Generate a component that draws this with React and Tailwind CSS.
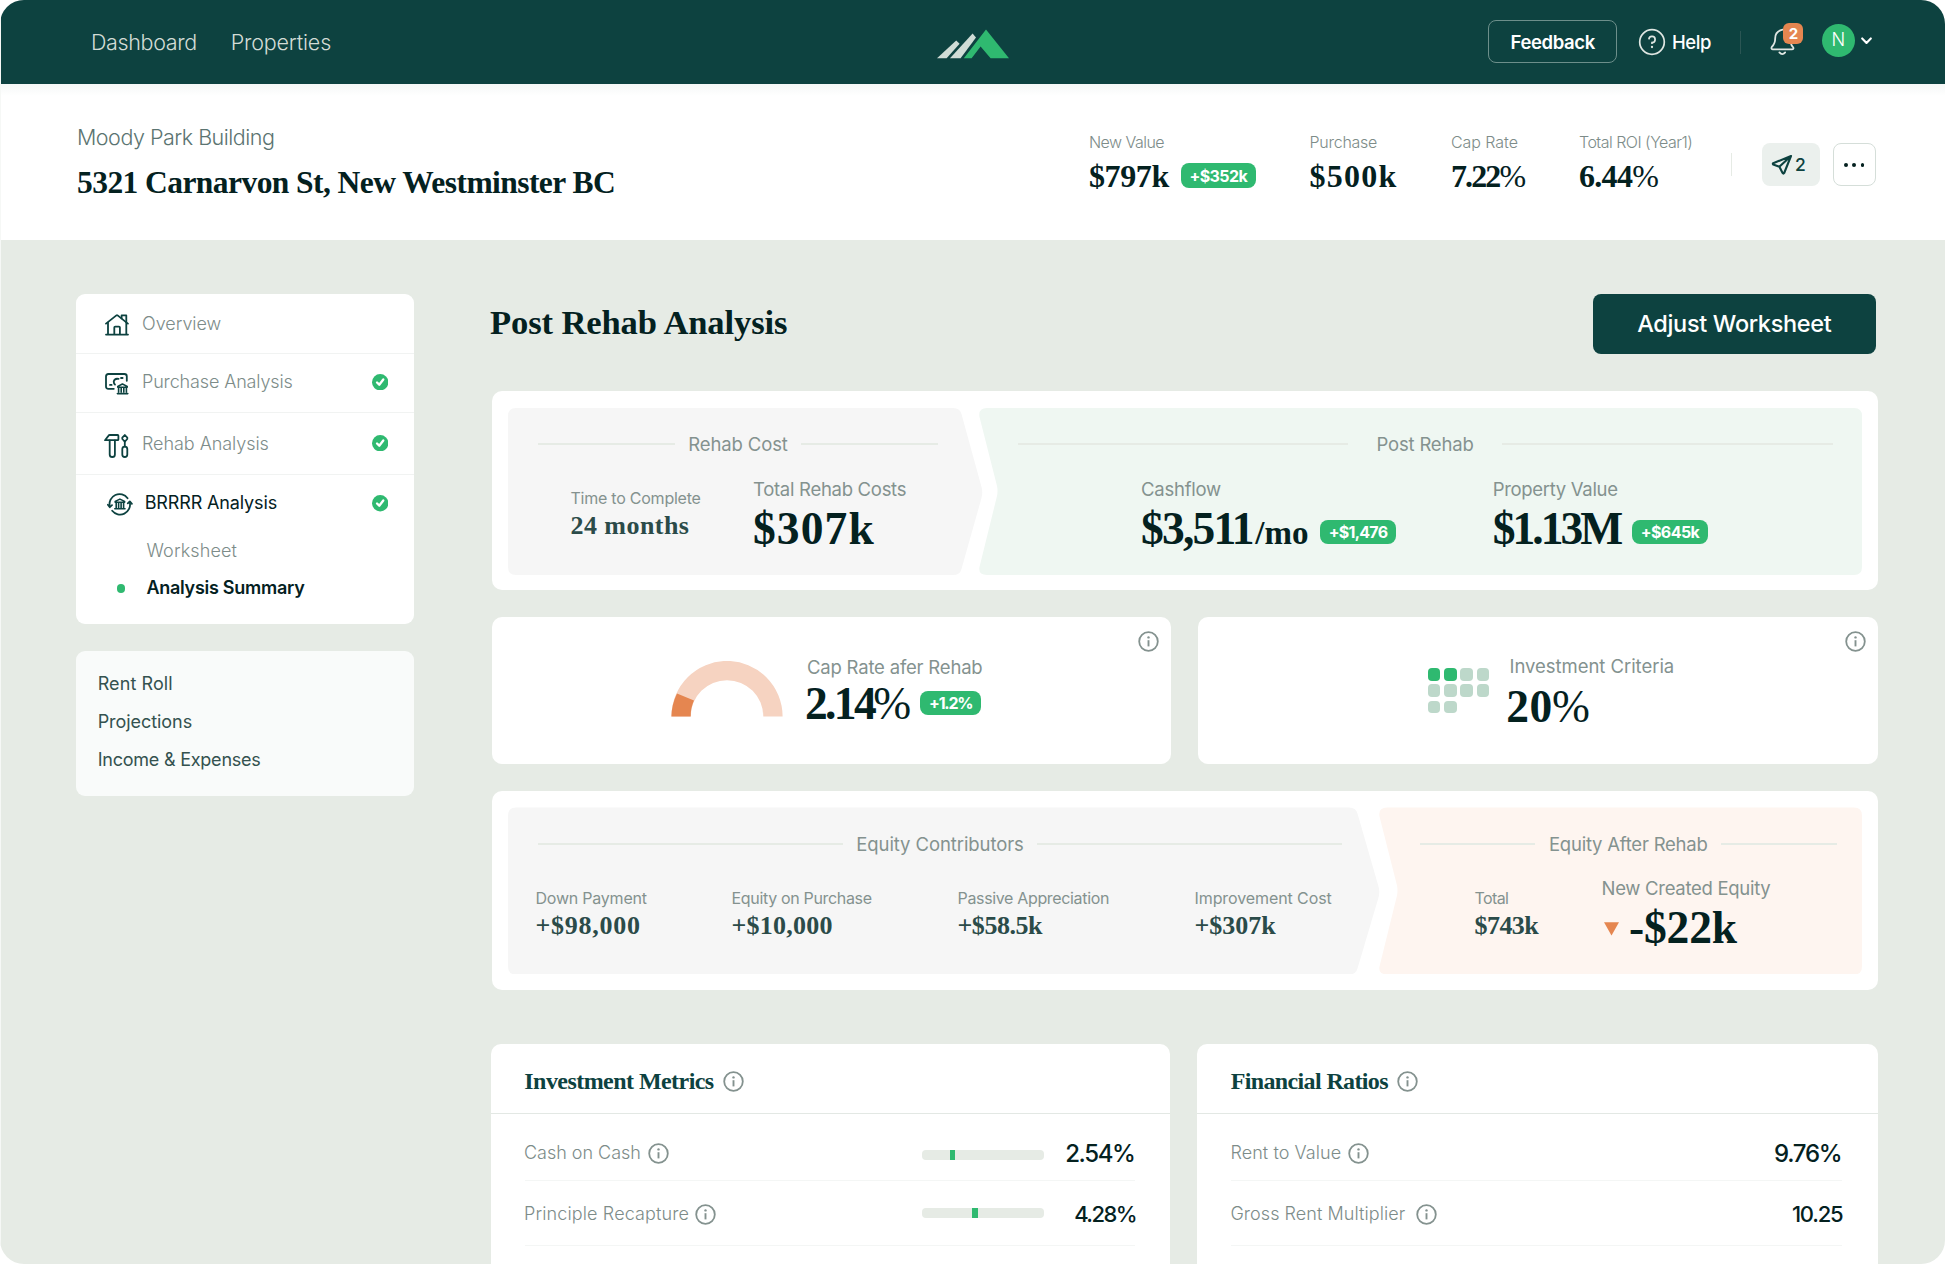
const SANS = "font-['Inter','Liberation_Sans',sans-serif]";
const SERIF = "font-['Liberation_Serif',serif] font-bold";
const LABEL_SM = "text-[16px] leading-[20px] whitespace-nowrap text-[#84928f]";
const LABEL_LG = "text-[18.5px] leading-[24px] whitespace-nowrap text-[#84928f]";
const VALUE_SM = `${SERIF} text-[26px] leading-[30px] whitespace-nowrap text-[#2b4b49]`;
const VALUE_LG = `${SERIF} text-[45.5px] leading-[50px] whitespace-nowrap text-[#04211f]`;

function Logo() {
  return (
    <svg width="72" height="30" viewBox="0 0 72 30" className="mt-[28.5px]">
      <path d="M0 29.3 19.2 11.6 22.6 14.8 9.6 29.3Z" fill="#d0dcd6" />
      <path d="M13 29.3 35.6 4.6 39 8.4 23.6 29.3Z" fill="#d0dcd6" />
      <path d="M26.8 29.3 49 .4 72 29.3H53.6L43.6 17.6 34.6 29.3Z" fill="#2fb970" />
    </svg>
  );
}

function InfoIcon({ className = "" }) {
  return (
    <svg width="21" height="21" viewBox="0 0 21 21" fill="none" className={`shrink-0 ${className}`}>
      <circle cx="10.5" cy="10.5" r="9.3" stroke="#84928f" strokeWidth="1.8" />
      <path d="M10.5 9.2V15.4" stroke="#84928f" strokeWidth="1.9" />
      <circle cx="10.5" cy="6.4" r="1.2" fill="#84928f" />
    </svg>
  );
}

function CheckIcon({ className = "" }) {
  return (
    <svg width="16.4" height="16.4" viewBox="0 0 16 16" fill="none" className={`shrink-0 ${className}`}>
      <circle cx="8" cy="8" r="8" fill="#2fb970" />
      <path d="M4.9 8.3 7.1 10.4 11 5.4" stroke="#fff" strokeWidth="2.3" strokeLinecap="round" strokeLinejoin="round" />
    </svg>
  );
}

function Icon({ w, h, className = "", children }) {
  return (
    <svg
      width={w}
      height={h}
      viewBox={`0 0 ${w} ${h}`}
      fill="none"
      stroke="#0d4240"
      strokeWidth="1.8"
      strokeLinecap="round"
      strokeLinejoin="round"
      className={`shrink-0 ${className}`}
    >
      {children}
    </svg>
  );
}

function HouseIcon({ className }) {
  return (
    <Icon w={24} h={22} className={className}>
      <path d="M1 9.6 11.4 1.4Q12 1 12.6 1.4L22.9 9.6" />
      <path d="M16.6 4.4V1.4H21.3V8" />
      <path d="M3 8.6V20M21.3 8.6V20M1 20.6H23" />
      <path d="M9.3 20V13.6Q9.3 12.7 10.2 12.7H14Q14.9 12.7 14.9 13.6V20" />
    </Icon>
  );
}

function PurchaseIcon({ className }) {
  return (
    <Icon w={24} h={22} className={className}>
      <path d="M8.8 15.8H3.4Q1 15.8 1 13.4V3.4Q1 1 3.4 1H19.4Q21.8 1 21.8 3.4V7.8" />
      <path d="M13.6 5.9Q9.6 5 8.7 8.6 8.7 10.4 10 11.6" />
      <path d="M16 5H17.6M5 11.9H6.6" />
      <path d="M12.8 14.2V13.4L17.4 11 22.2 13.4V14.2ZM13.6 14.6V19M16.2 14.6V19M18.8 14.6V19M21.4 14.6V19M12.4 20.6H22.8" strokeWidth="1.6" />
    </Icon>
  );
}

function ToolsIcon({ className }) {
  return (
    <Icon w={25} h={24} className={className}>
      <path d="M1 6.2 4.6 1.6Q5 1 5.8 1H13.6Q14.4 1 14.4 1.8V5.4Q14.4 6.2 13.6 6.2Z" />
      <path d="M5.7 6.4V20.4A2.6 2.6 0 0 0 10.9 20.4V6.4" />
      <path d="M18.3 3.6 20.8 1 23.3 3.6V5L20.8 7.6 18.3 5Z" />
      <path d="M20.8 7.6V12.4" />
      <rect x="18.3" y="12.6" width="5" height="10.4" rx="2.5" />
    </Icon>
  );
}

function CycleIcon({ className }) {
  return (
    <Icon w={26} h={23} className={className}>
      <path d="M2.8 13.4A10 10 0 0 1 20.6 5.2" />
      <path d="M22.8 9.4A10 10 0 0 1 5.2 17.8" />
      <path d="M.9 11.8 2.8 14.2 5 12.2M20.8 10.4 22.8 8.4 24.9 10.8" />
      <path d="M8.2 9.2V8.4L12.9 6.1 17.6 8.4V9.2ZM9.2 9.6V15M11.6 9.6V15M14.1 9.6V15M16.6 9.6V15M7.8 15.8H18" strokeWidth="1.6" />
    </Icon>
  );
}

function Badge({ children, className = "" }) {
  return (
    <span
      className={`flex h-[24.5px] shrink-0 items-center justify-center rounded-[8px] bg-[#2fb970] text-[16px] leading-none font-[650] whitespace-nowrap text-white ${className}`}
    >
      {children}
    </span>
  );
}

function Percent({ className = "" }) {
  return <span className={`font-normal ${className}`}>%</span>;
}

function TopBar() {
  return (
    <header className="flex h-[83.5px] items-start bg-[#0d4240]">
      <nav className="flex w-[935.7px] pt-[29.3px] pl-[90px] text-[21.5px] leading-[26px] font-light text-[#d3dcd6]">
        <a className="w-[139.7px] tracking-[-0.36px]">Dashboard</a>
        <a className="tracking-[-0.17px]">Properties</a>
      </nav>
      <Logo />
      <div className="ml-auto flex items-start pr-[73px] text-[18.5px] leading-[24px] text-white">
        <button className="mt-[20px] flex h-[43px] w-[128.5px] items-center justify-center rounded-[8px] border border-[#6d8f8b] font-semibold tracking-[-0.38px]">
          Feedback
        </button>
        <svg width="28" height="28" viewBox="0 0 28 28" fill="none" className="mt-[28px] ml-[21px]">
          <circle cx="14" cy="14" r="12.3" stroke="#dfe6e2" strokeWidth="1.7" />
          <path d="M10.9 11.4A3.1 3.1 0 1 1 14 14.6V16" stroke="#dfe6e2" strokeWidth="1.7" />
          <circle cx="14" cy="19" r="1.15" fill="#dfe6e2" />
        </svg>
        <span className="mt-[29.8px] ml-[6px] w-[68.5px] font-medium tracking-[-0.37px]">Help</span>
        <span className="mt-[31px] h-[23px] w-px bg-[#2b5654]" />
        <div className="relative mt-[23px] ml-[29px] h-[33px] w-[34px]">
          <svg width="26" height="28" viewBox="0 0 26 28" fill="none" stroke="#dfe6e2" strokeWidth="1.8" strokeLinecap="round" className="mt-[5px]">
            <path d="M12.6 1.6C7.6 2.6 5.2 6 5.2 10.2 5.2 14.4 4.4 16.4 1.8 18.8 1 20.4 1.6 21.4 3 21.4H21.8C23.4 21.4 24 20 22.8 18.8 21.6 17.6 21.2 16.6 20.8 15" />
            <path d="M9.4 24.4Q12.2 28 15.2 24.4" />
          </svg>
          <span className="absolute top-0 left-[13px] flex h-[20.5px] w-[20px] items-center justify-center rounded-[6px] bg-[#e58650] text-[15px] leading-none font-bold">
            2
          </span>
        </div>
        <span className="mt-[24px] ml-[17.6px] flex h-[32.5px] w-[32.5px] items-center justify-center rounded-full bg-[#2fb970] text-[18px] leading-none font-light">
          N
        </span>
        <svg width="11" height="8" viewBox="0 0 11 8" fill="none" className="mt-[37px] ml-[6.5px]">
          <path d="M1.2 1.4 5.5 5.9 9.8 1.4" stroke="#fff" strokeWidth="2.1" strokeLinecap="round" strokeLinejoin="round" />
        </svg>
      </div>
    </header>
  );
}

function HeaderStat({ label, labelClass, className, children }) {
  return (
    <div className={`mt-[48.4px] flex shrink-0 flex-col gap-[6px] ${className}`}>
      <span className={`text-[16px] leading-[20px] font-light whitespace-nowrap text-[#7d8c89] ${labelClass}`}>{label}</span>
      <div className={`${SERIF} flex items-start text-[32px] leading-[36px] text-[#04211f]`}>{children}</div>
    </div>
  );
}

function PropertyHeader() {
  return (
    <section className="flex h-[156.5px] items-start bg-white bg-linear-to-b from-[#f5f8f7] to-white to-[12px] pl-[76px]">
      <div className="mt-[40.7px] flex w-[1012px] flex-col gap-[13.5px]">
        <span className="text-[21.5px] leading-[26px] font-light tracking-[-0.49px] text-[#5b7471]">Moody Park Building</span>
        <h1 className={`${SERIF} text-[31.5px] leading-[38px] tracking-[-0.56px] text-[#04211f]`}>
          5321 Carnarvon St, New Westminster BC
        </h1>
      </div>
      <HeaderStat label="New Value" labelClass="tracking-[-0.53px]" className="w-[220.5px]">
        <span className="w-[91.8px] tracking-[-0.4px]">$797k</span>
        <Badge className={`${SANS} mt-[5.4px] w-[75px] tracking-[-0.6px]`}>+$352k</Badge>
      </HeaderStat>
      <HeaderStat label="Purchase" labelClass="tracking-[-0.25px]" className="w-[141.5px]">
        <span className="tracking-[1.25px]">$500k</span>
      </HeaderStat>
      <HeaderStat label="Cap Rate" labelClass="tracking-[-0.05px]" className="w-[128px]">
        <span className="tracking-[-1.9px]">7.22<Percent /></span>
      </HeaderStat>
      <HeaderStat label="Total ROI (Year1)" labelClass="tracking-[-0.52px]" className="w-[151.5px]">
        <span className="tracking-[-0.7px]">6.44<Percent /></span>
      </HeaderStat>
      <span className="mt-[69px] h-[23px] w-px bg-[#e6ebe5]" />
      <button className="mt-[59.8px] ml-[30px] flex h-[43px] w-[58px] items-center rounded-[8px] bg-[#ebf0ed] pl-[9px] text-[17.5px] font-medium text-[#0d4240]">
        <svg width="22" height="22" viewBox="0 0 22 22" fill="none" stroke="#0d4240" strokeWidth="2.1" strokeLinejoin="round" strokeLinecap="round">
          <path d="M20 2 2.2 9.2Q1.4 9.8 2.2 10.6L8.4 12.8 11.6 19Q12.4 20.2 13.2 19L20 2ZM20 2 8.6 12.6" />
        </svg>
        <span className="ml-[2.5px]">2</span>
      </button>
      <button className="mt-[59.8px] ml-[13px] flex h-[43px] w-[43.5px] items-center justify-center gap-[4.4px] rounded-[8px] border border-[#d5ded9] bg-white">
        <span className="h-[3.8px] w-[3.8px] rounded-full bg-[#04211f]" />
        <span className="h-[3.8px] w-[3.8px] rounded-full bg-[#04211f]" />
        <span className="h-[3.8px] w-[3.8px] rounded-full bg-[#04211f]" />
      </button>
    </section>
  );
}

function Sidebar() {
  return (
    <aside className="mt-[54px] ml-[75px] w-[338px] shrink-0 text-[18px] leading-[24px] text-[#7d8c89]">
      <div className="h-[329.6px] rounded-[9px] bg-white font-light">
        <div className="flex h-[59.5px] items-start border-b border-[#f1f3f2] pl-[29px]">
          <HouseIcon className="mt-[20px]" />
          <span className="mt-[17.8px] ml-[13px] tracking-[-0.03px]">Overview</span>
        </div>
        <div className="flex h-[59.2px] items-start border-b border-[#f1f3f2] pr-[26px] pl-[29px]">
          <PurchaseIcon className="mt-[19.4px]" />
          <span className="mt-[16.4px] ml-[13px] tracking-[-0.14px]">Purchase Analysis</span>
          <CheckIcon className="mt-[20.4px] ml-auto" />
        </div>
        <div className="flex h-[62.4px] items-start border-b border-[#f1f3f2] pr-[26px] pl-[28px]">
          <ToolsIcon className="mt-[21.4px]" />
          <span className="mt-[19px] ml-[13px] tracking-[-0.06px]">Rehab Analysis</span>
          <CheckIcon className="mt-[22px] ml-auto" />
        </div>
        <div className="flex h-[41px] items-start pr-[26px] pl-[30.5px]">
          <CycleIcon className="mt-[18.2px]" />
          <span className="mt-[16px] ml-[12.2px] font-normal tracking-[-0.14px] text-[#04211f]">BRRRR Analysis</span>
          <CheckIcon className="mt-[20.4px] ml-auto" />
        </div>
        <div className="mt-[22.7px] pl-[70.5px] tracking-[0.12px]">Worksheet</div>
        <div className="mt-[13.7px] flex items-center pl-[40.7px] font-semibold tracking-[-0.27px] text-[#04211f]">
          <span className="mr-[21.2px] h-[8.5px] w-[8.5px] rounded-full bg-[#2fb970]" />
          Analysis Summary
        </div>
      </div>
      <div className="mt-[27.3px] flex h-[145.6px] flex-col rounded-[9px] bg-[#f9fbfa] pt-[14.4px] pl-[21.7px] leading-[37.8px] text-[#34524f]">
        <span className="tracking-[0.09px]">Rent Roll</span>
        <span className="tracking-[-0.06px]">Projections</span>
        <span className="tracking-[-0.23px]">Income &amp; Expenses</span>
      </div>
    </aside>
  );
}

function PanelTitle({ title, className, titleClass }) {
  return (
    <div className={`mt-[24.3px] flex items-center ${className}`}>
      <span className="h-[2px] flex-1 bg-[#e6ebe5]" />
      <span className={`${LABEL_LG} ${titleClass}`}>{title}</span>
      <span className="h-[2px] flex-1 bg-[#e6ebe5]" />
    </div>
  );
}

function SmallStat({ label, value, labelClass, valueClass, className }) {
  return (
    <div className={`mt-[31.9px] flex shrink-0 flex-col gap-[3.2px] ${className}`}>
      <span className={`${LABEL_SM} ${labelClass}`}>{label}</span>
      <span className={`${VALUE_SM} ${valueClass}`}>{value}</span>
    </div>
  );
}

function LargeStat({ label, labelClass, className = "", children }) {
  return (
    <div className={`mt-[20.3px] flex shrink-0 flex-col gap-[3.2px] ${className}`}>
      <span className={`${LABEL_LG} ${labelClass}`}>{label}</span>
      <div className="flex items-start">{children}</div>
    </div>
  );
}

function RehabCard() {
  return (
    <div className="mt-[37.3px] flex h-[199px] rounded-[10px] bg-white pt-[17px] pl-[16px]">
      <div className="h-[167px] w-[475px] shrink-0 bg-[#f6f6f6] [clip-path:path('M8_0H445Q452_0_453.5_6L473.5_79Q475_84.5_473.5_90L453.5_161Q452_167_445_167H8Q0_167_0_159V8Q0_0_8_0Z')]">
        <PanelTitle title="Rehab Cost" titleClass="tracking-[-0.12px]" className="gap-[13px] pr-[45px] pl-[30px]" />
        <div className="flex items-start pl-[62.5px]">
          <SmallStat label="Time to Complete" value="24 months" labelClass="tracking-[-0.24px]" valueClass="tracking-[0.45px]" className="w-[182.5px]" />
          <LargeStat label="Total Rehab Costs" labelClass="tracking-[-0.29px]">
            <span className={`${VALUE_LG} tracking-[1.1px]`}>$307k</span>
          </LargeStat>
        </div>
      </div>
      <div className="-ml-[4px] h-[167px] w-[883px] shrink-0 bg-[#eff7f2] [clip-path:path('M8_0H875Q883_0_883_8V159Q883_167_875_167H8Q-1_167_.5_159L18_88Q19_83_18_78L.5_9Q-1_0_8_0Z')]">
        <PanelTitle title="Post Rehab" titleClass="tracking-[-0.18px]" className="gap-[28.5px] pr-[29.5px] pl-[38.5px]" />
        <div className="flex items-start pl-[162px]">
          <LargeStat label="Cashflow" labelClass="tracking-[-0.24px]" className="w-[351.7px]">
            <span className={`${VALUE_LG} w-[179px] tracking-[-1.8px]`}>
              $3,511<span className="ml-[2.5px] text-[33px] tracking-[0px]">/mo</span>
            </span>
            <Badge className="mt-[16.2px] w-[76px] tracking-[-0.75px]">+$1,476</Badge>
          </LargeStat>
          <LargeStat label="Property Value" labelClass="tracking-[-0.31px]">
            <span className={`${VALUE_LG} w-[139.3px] tracking-[-2.96px]`}>$1.13M</span>
            <Badge className="mt-[16.2px] w-[76px] tracking-[-0.56px]">+$645k</Badge>
          </LargeStat>
        </div>
      </div>
    </div>
  );
}

function Gauge() {
  return (
    <svg width="112" height="56" viewBox="0 0 112 56" className="mt-[44.5px] ml-[179.3px] shrink-0">
      <path d="M.4 55.5A55.6 55.6 0 0 1 111.6 55.5H92.3A36.3 36.3 0 0 0 19.7 55.5Z" fill="#f6d3c1" />
      <path d="M.4 55.5A55.6 55.6 0 0 1 6 32.4L23 39.6A36.3 36.3 0 0 0 19.7 55.5Z" fill="#e58650" />
    </svg>
  );
}

function CriteriaGrid({ met, total }) {
  return (
    <div className="mt-[51px] ml-[229.3px] grid w-[61.6px] shrink-0 grid-cols-4 gap-[3.7px]">
      {Array.from({ length: total }, (_, i) => (
        <span key={i} className={`h-[12.6px] w-[12.6px] rounded-[4px] ${i < met ? "bg-[#2fb970]" : "bg-[#bdd8ca]"}`} />
      ))}
    </div>
  );
}

function MiddleCards() {
  return (
    <div className="mt-[27px] flex gap-[27px]">
      <div className="flex h-[147.3px] w-[679.3px] items-start rounded-[10px] bg-white">
        <Gauge />
        <div className="mt-[38px] ml-[21.6px]">
          <div className={`${LABEL_LG} pl-[2px] tracking-[-0.19px]`}>Cap Rate afer Rehab</div>
          <div className="flex items-start">
            <span className={`${VALUE_LG} w-[115.5px] tracking-[-2.6px]`}>2.14<Percent className="-ml-px" /></span>
            <Badge className="mt-[11.6px] w-[60.5px] tracking-[-1.25px]">+1.2%</Badge>
          </div>
        </div>
        <InfoIcon className="mt-[14px] mr-[12.5px] ml-auto" />
      </div>
      <div className="flex h-[147.3px] w-[679.3px] items-start rounded-[10px] bg-white">
        <CriteriaGrid met={2} total={10} />
        <div className="mt-[36.6px] ml-[17px]">
          <div className={`${LABEL_LG} pl-[3.3px] tracking-[-0.04px]`}>Investment Criteria</div>
          <div className={`${VALUE_LG} mt-[4.5px] tracking-[0.6px]`}>20<Percent className="-ml-px" /></div>
        </div>
        <InfoIcon className="mt-[14px] mr-[11.7px] ml-auto" />
      </div>
    </div>
  );
}

function EquityCard() {
  return (
    <div className="mt-[26.7px] flex h-[199px] rounded-[10px] bg-white pt-[16.5px] pl-[16px]">
      <div className="h-[167px] w-[872px] shrink-0 bg-[#f6f6f6] [clip-path:path('M8_0H841Q848_0_849.5_6L870.5_79Q872_84.5_870.5_90L849.5_161Q848_167_841_167H8Q0_167_0_159V8Q0_0_8_0Z')]">
        <PanelTitle title="Equity Contributors" titleClass="tracking-[-0.09px]" className="gap-[13px] pr-[38px] pl-[30px]" />
        <div className="flex items-start pl-[27.5px]">
          <SmallStat label="Down Payment" value="+$98,000" labelClass="tracking-[-0.22px]" valueClass="tracking-[0.75px]" className="w-[196px]" />
          <SmallStat label="Equity on Purchase" value="+$10,000" labelClass="tracking-[-0.33px]" valueClass="tracking-[0.25px]" className="w-[226px]" />
          <SmallStat label="Passive Appreciation" value="+$58.5k" labelClass="tracking-[-0.34px]" valueClass="tracking-[-0.45px]" className="w-[237px]" />
          <SmallStat label="Improvement Cost" value="+$307k" labelClass="tracking-[-0.09px]" valueClass="tracking-[0px]" className="" />
        </div>
      </div>
      <div className="-ml-px h-[167px] w-[483px] shrink-0 bg-[#fef5f0] [clip-path:path('M8_0H475Q483_0_483_8V159Q483_167_475_167H8Q-1_167_.5_159L18_88Q19_83_18_78L.5_9Q-1_0_8_0Z')]">
        <PanelTitle title="Equity After Rehab" titleClass="tracking-[-0.23px]" className="gap-[13.5px] pr-[25.5px] pl-[41px]" />
        <div className="flex items-start pl-[95.5px]">
          <SmallStat label="Total" value="$743k" labelClass="tracking-[-0.59px]" valueClass="tracking-[-0.55px]" className="w-[127px]" />
          <LargeStat label="New Created Equity" labelClass="tracking-[-0.29px]">
            <svg width="15" height="14" viewBox="0 0 15 14" className="mt-[19.2px] mr-[10.5px] ml-[2px]">
              <path d="M0 .2H15L7.5 13.6Z" fill="#e58650" />
            </svg>
            <span className={`${VALUE_LG} tracking-[-0.15px]`}>-$22k</span>
          </LargeStat>
        </div>
      </div>
    </div>
  );
}

function Meter({ position, className }) {
  return (
    <span className={`flex h-[9.7px] w-[122px] overflow-hidden rounded-[4px] bg-[#e6ebe5] ${className}`}>
      <span className="h-full w-[5.5px] bg-[#2fb970]" style={{ marginLeft: `${position}px` }} />
    </span>
  );
}

function MetricsCard({ title, titleClass, className, children }) {
  return (
    <div className={`h-[221px] rounded-t-[10px] bg-white ${className}`}>
      <div className="flex h-[70px] items-start border-b border-[#e3e8e4] pl-[33.7px]">
        <h3 className={`${SERIF} mt-[23.4px] text-[24px] leading-[28px] text-[#0d4240] ${titleClass}`}>{title}</h3>
        <InfoIcon className="mt-[27.7px] ml-[9.3px]" />
      </div>
      {children}
    </div>
  );
}

function BottomCards() {
  return (
    <div className="mt-[53.7px] -ml-[1.4px] flex gap-[27px] text-[18px] leading-[24px] font-light text-[#7d8c89]">
      <MetricsCard title="Investment Metrics" titleClass="tracking-[-0.55px]" className="w-[679.4px]">
        <div className="mr-[35.5px] ml-[34.4px] flex h-[67.5px] items-start border-b-[1.5px] border-[#f4f6f5] -indent-px">
          <span className="mt-[27.4px] tracking-[-0.02px]">Cash on Cash</span>
          <InfoIcon className="mt-[29px] ml-[7px]" />
          <Meter position={28} className="mt-[36.6px] ml-auto" />
          <span className="mt-[26.6px] w-[91px] text-right text-[24px] leading-[28px] font-medium tracking-[-1.37px] text-[#04211f]">2.54%</span>
        </div>
        <div className="mr-[35.5px] ml-[34.4px] flex h-[65px] items-start border-b-[1.5px] border-[#f4f6f5] -indent-px">
          <span className="mt-[21px] tracking-[0.13px]">Principle Recapture</span>
          <InfoIcon className="mt-[22.7px] ml-[6.3px]" />
          <Meter position={50.5} className="mt-[27px] ml-auto" />
          <span className="mt-[18.4px] -mr-[1.5px] w-[92.5px] text-right text-[22px] leading-[28px] font-medium tracking-[-1.57px] text-[#04211f]">4.28%</span>
        </div>
      </MetricsCard>
      <MetricsCard title="Financial Ratios" titleClass="tracking-[-0.63px]" className="w-[680.5px]">
        <div className="mr-[36px] ml-[34.4px] flex h-[67.5px] items-start border-b-[1.5px] border-[#f4f6f5] -indent-px">
          <span className="mt-[27.4px] tracking-[0.07px]">Rent to Value</span>
          <InfoIcon className="mt-[29px] ml-[7px]" />
          <span className="mt-[26.6px] ml-auto text-[24px] leading-[28px] font-medium tracking-[-1.22px] text-[#04211f]">9.76%</span>
        </div>
        <div className="mr-[36px] ml-[34.4px] flex h-[65px] items-start border-b-[1.5px] border-[#f4f6f5] -indent-px">
          <span className="mt-[21px] tracking-[0.06px]">Gross Rent Multiplier</span>
          <InfoIcon className="mt-[22.7px] ml-[11px]" />
          <span className="mt-[18.4px] -mr-px ml-auto text-[22px] leading-[28px] font-medium tracking-[-1.19px] text-[#04211f]">10.25</span>
        </div>
      </MetricsCard>
    </div>
  );
}

export default function App() {
  return (
    <div className="bg-white">
      <div className={`${SANS} h-[1264px] w-[1945px] overflow-hidden rounded-[24px] bg-[#e6ebe5]`}>
        <div className="h-full border-l border-[#f6f8f6]">
          <TopBar />
          <PropertyHeader />
          <div className="flex items-start">
            <Sidebar />
            <main className="ml-[78px] w-[1385.6px] shrink-0">
              <div className="flex items-start pt-[54px]">
                <h2 className={`${SERIF} mt-[7px] -ml-[2px] text-[34.6px] leading-[42px] tracking-[-0.13px] text-[#04211f]`}>
                  Post Rehab Analysis
                </h2>
                <button className="mr-[1.5px] ml-auto h-[59.7px] w-[283.6px] rounded-[8px] bg-[#0d4240] text-[23.5px] font-medium tracking-[-0.33px] text-white">
                  Adjust Worksheet
                </button>
              </div>
              <RehabCard />
              <MiddleCards />
              <EquityCard />
              <BottomCards />
            </main>
          </div>
        </div>
      </div>
    </div>
  );
}
